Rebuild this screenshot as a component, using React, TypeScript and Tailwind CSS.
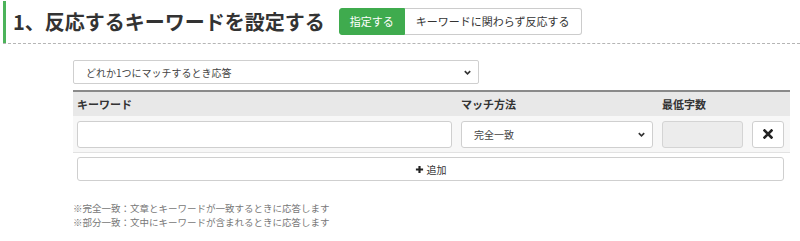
import React from "react";

const font = { fontFamily: '"Noto Sans CJK JP", "Noto Sans", sans-serif' };

function Chevron() {
  return (
    <svg width="9" height="9" viewBox="0 0 10 10" className="text-[#333]">
      <path d="M2 3.5 L5 6.5 L8 3.5" fill="none" stroke="currentColor" strokeWidth="1.8" />
    </svg>
  );
}

export default function App() {
  return (
    <div className="w-[800px] h-[241px] bg-white text-[#333] overflow-hidden" style={font}>
      <div className="flex items-center h-[44px] border-b border-dashed border-[#b5b5b5] ml-[3px]">
        <div className="flex items-center h-[42px] border-l-[3px] border-[#4cb35a] pl-[7px]">
          <h1 className="text-[20px] font-bold leading-none text-[#333]">1、反応するキーワードを設定する</h1>
          <div className="flex ml-[14px] h-[27px] text-[11px]">
            <div className="flex items-center px-[10px] bg-[#3fab4e] text-white rounded-l-[3px] border border-[#3fab4e]">指定する</div>
            <div className="flex items-center px-[11px] bg-white border border-l-0 border-[#cccccc] rounded-r-[3px] text-[#333]">キーワードに関わらず反応する</div>
          </div>
        </div>
      </div>

      <div className="ml-[73px] mr-[10px] mt-[16px]">
        <div className="w-[406px] h-[24px] border border-[#cfcfcf] rounded-[2px] flex items-center justify-between pl-[12px] pr-[6px] text-[10px] text-[#444]">
          <span>どれか1つにマッチするとき応答</span>
          <Chevron />
        </div>

        <div className="mt-[6px] border-t-2 border-[#8a8a8a] bg-[#e8e8e8] h-[26px] flex items-center text-[11px] font-bold text-[#333]">
          <div className="w-[384px] pl-[4px]">キーワード</div>
          <div className="w-[201px] pl-[4px]">マッチ方法</div>
          <div className="pl-[4px]">最低字数</div>
        </div>

        <div className="bg-[#f7f7f7] h-[37px] flex items-center px-[4px] gap-[9px] border-b border-[#e2e2e2]">
          <div className="w-[375px] h-[27px] bg-white border border-[#cfcfcf] rounded-[3px]" />
          <div className="w-[192px] h-[27px] bg-white border border-[#cfcfcf] rounded-[3px] flex items-center justify-between pl-[12px] pr-[6px] text-[10px] text-[#444]">
            <span>完全一致</span>
            <Chevron />
          </div>
          <div className="w-[81px] h-[27px] bg-[#ececec] border border-[#d4d4d4] rounded-[3px]" />
          <div className="w-[32px] h-[27px] bg-white border border-[#cfcfcf] rounded-[3px] flex items-center justify-center">
            <svg width="10" height="10" viewBox="0 0 10 10">
              <path d="M1.5 1.5 L8.5 8.5 M8.5 1.5 L1.5 8.5" stroke="#222" strokeWidth="2.6" strokeLinecap="square" />
            </svg>
          </div>
        </div>

        <div className="mt-[4px] ml-[4px] w-[707px] h-[24px] border border-[#cfcfcf] rounded-[3px] flex items-center justify-center gap-[3px] text-[10px] text-[#333]">
          <svg width="9" height="9" viewBox="0 0 10 10">
            <path d="M5 1 V9 M1 5 H9" stroke="#222" strokeWidth="2.4" />
          </svg>
          <span>追加</span>
        </div>

        <div className="mt-[20px] text-[9.5px] leading-[14px] text-[#777]">
          <div>※完全一致：文章とキーワードが一致するときに応答します</div>
          <div>※部分一致：文中にキーワードが含まれるときに応答します</div>
        </div>
      </div>
    </div>
  );
}
